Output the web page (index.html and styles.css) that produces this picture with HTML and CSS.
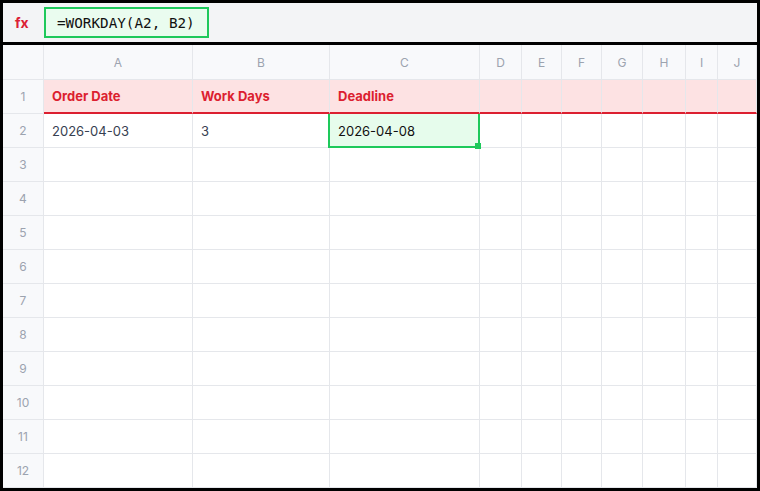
FILE: index.html
```html
<!DOCTYPE html>
<html>
<head>
<meta charset="utf-8">
<link rel="stylesheet" href="styles.css">
</head>
<body>
<div class="app">
  <div class="fbar">
    <div class="fx">fx</div>
    <div class="finput">=WORKDAY(A2, B2)</div>
  </div>
  <div class="sheet">
    <div class="ch corner"></div>
    <div class="ch">A</div><div class="ch">B</div><div class="ch">C</div><div class="ch">D</div><div class="ch">E</div><div class="ch">F</div><div class="ch">G</div><div class="ch">H</div><div class="ch">I</div><div class="ch">J</div>

    <div class="rh">1</div>
    <div class="c hd">Order Date</div><div class="c hd">Work Days</div><div class="c hd">Deadline</div><div class="c hd"></div><div class="c hd"></div><div class="c hd"></div><div class="c hd"></div><div class="c hd"></div><div class="c hd"></div><div class="c hd"></div>

    <div class="rh">2</div>
    <div class="c">2026-04-03</div><div class="c">3</div><div class="c sel">2026-04-08<span class="selbox"><span class="handle"></span></span></div><div class="c"></div><div class="c"></div><div class="c"></div><div class="c"></div><div class="c"></div><div class="c"></div><div class="c"></div>

    <div class="rh">3</div><div class="c"></div><div class="c"></div><div class="c"></div><div class="c"></div><div class="c"></div><div class="c"></div><div class="c"></div><div class="c"></div><div class="c"></div><div class="c"></div>
    <div class="rh">4</div><div class="c"></div><div class="c"></div><div class="c"></div><div class="c"></div><div class="c"></div><div class="c"></div><div class="c"></div><div class="c"></div><div class="c"></div><div class="c"></div>
    <div class="rh">5</div><div class="c"></div><div class="c"></div><div class="c"></div><div class="c"></div><div class="c"></div><div class="c"></div><div class="c"></div><div class="c"></div><div class="c"></div><div class="c"></div>
    <div class="rh">6</div><div class="c"></div><div class="c"></div><div class="c"></div><div class="c"></div><div class="c"></div><div class="c"></div><div class="c"></div><div class="c"></div><div class="c"></div><div class="c"></div>
    <div class="rh">7</div><div class="c"></div><div class="c"></div><div class="c"></div><div class="c"></div><div class="c"></div><div class="c"></div><div class="c"></div><div class="c"></div><div class="c"></div><div class="c"></div>
    <div class="rh">8</div><div class="c"></div><div class="c"></div><div class="c"></div><div class="c"></div><div class="c"></div><div class="c"></div><div class="c"></div><div class="c"></div><div class="c"></div><div class="c"></div>
    <div class="rh">9</div><div class="c"></div><div class="c"></div><div class="c"></div><div class="c"></div><div class="c"></div><div class="c"></div><div class="c"></div><div class="c"></div><div class="c"></div><div class="c"></div>
    <div class="rh">10</div><div class="c"></div><div class="c"></div><div class="c"></div><div class="c"></div><div class="c"></div><div class="c"></div><div class="c"></div><div class="c"></div><div class="c"></div><div class="c"></div>
    <div class="rh">11</div><div class="c"></div><div class="c"></div><div class="c"></div><div class="c"></div><div class="c"></div><div class="c"></div><div class="c"></div><div class="c"></div><div class="c"></div><div class="c"></div>
    <div class="rh">12</div><div class="c"></div><div class="c"></div><div class="c"></div><div class="c"></div><div class="c"></div><div class="c"></div><div class="c"></div><div class="c"></div><div class="c"></div><div class="c"></div>
  </div>
</div>
</body>
</html>
```

FILE: styles.css
```css
* { box-sizing: border-box; }
html, body { margin: 0; padding: 0; }
body { font-family: Inter, "Liberation Sans", sans-serif; background: #000; }
.app {
  width: 760px;
  height: 491px;
  border: 3px solid #000;
  background: #000;
  overflow: hidden;
  display: flex;
  flex-direction: column;
}
.fbar {
  flex: none;
  height: 42px;
  background: #f3f4f6;
  display: flex;
  align-items: center;
  border-bottom: 3px solid #000;
}
.fx {
  width: 41px;
  flex: none;
  padding-left: 12px;
  color: #dc1f35;
  font-weight: 700;
  font-size: 14px;
}
.finput {
  height: 31px;
  border: 2px solid #1ec95b;
  background: #eafcef;
  padding: 0 12px 0 11px;
  display: flex;
  align-items: center;
  font-family: "DejaVu Sans Mono", monospace;
  font-size: 14.3px;
  color: #111;
}
.sheet {
  display: grid;
  grid-template-columns: 41px 149px 137px 150px 42px 40px 40px 41px 43px 32px 39px;
  grid-template-rows: 35px;
  grid-auto-rows: 34px;
  background: #fff;
  flex: none;
}
.ch, .rh, .c {
  border-right: 1px solid #e5e7eb;
  border-bottom: 1px solid #e5e7eb;
}
.ch {
  background: #f8f9fb;
  color: #9ca3af;
  font-size: 12px;
  display: flex;
  align-items: center;
  justify-content: center;
}
.rh {
  background: #f8f9fb;
  color: #9ca3af;
  font-size: 12px;
  display: flex;
  align-items: center;
  justify-content: center;
}
.c {
  display: flex;
  align-items: center;
  padding: 0 8px;
  font-size: 13px;
  color: #374151;
  background: #fff;
}
.c.hd {
  background: #fde2e3;
  color: #dc1f30;
  font-weight: 700;
  border-bottom: 2px solid #dc1f30;
}
.c.sel {
  position: relative;
  background: #e6fcec;
  color: #111;
}
.selbox {
  position: absolute;
  left: -2px;
  right: -1px;
  top: 0;
  bottom: -1px;
  border: 2px solid #1ec95b;
  border-top: none;
}
.handle {
  position: absolute;
  right: -3px;
  bottom: -3px;
  width: 6px;
  height: 6px;
  background: #1ec95b;
}
```
